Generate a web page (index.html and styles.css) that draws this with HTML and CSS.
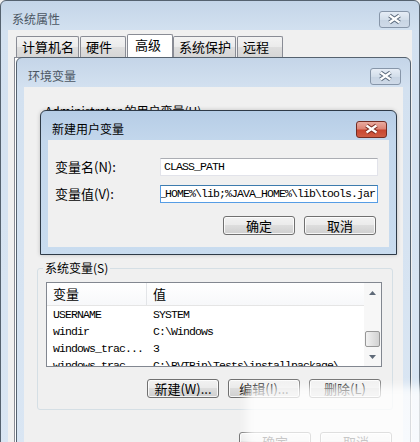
FILE: index.html
```html
<!DOCTYPE html>
<html lang="zh-CN">
  <head>
    <meta charset="UTF-8" />
    <meta name="viewport" content="width=device-width, initial-scale=1.0" />
    <title>新建用户变量</title>
    <link rel="stylesheet" href="styles.css">
  </head>
  <body>
    <div class="desktop">
      <!-- 系统属性 -->
      <section class="window outer">
        <header class="titlebar">
          <span class="title">系统属性</span>
          <span class="close">
            <svg viewBox="0 0 31 17" width="31" height="17"><path class="x-out" d="M10.5 4.5L20.5 11.5M20.5 4.5L10.5 11.5"/><path class="x-in" d="M10.5 4.5L20.5 11.5M20.5 4.5L10.5 11.5"/></svg>
          </span>
        </header>
        <div class="client">
          <nav class="tabs">
            <span class="tab">计算机名</span>
            <span class="tab">硬件</span>
            <span class="tab selected">高级</span>
            <span class="tab">系统保护</span>
            <span class="tab">远程</span>
          </nav>
          <div class="tab-page"></div>
        </div>
      </section>

      <!-- 环境变量 -->
      <section class="window env">
        <header class="titlebar">
          <span class="title">环境变量</span>
          <span class="close">
            <svg viewBox="0 0 31 17" width="31" height="17"><path class="x-out" d="M10.5 4.5L20.5 11.5M20.5 4.5L10.5 11.5"/><path class="x-in" d="M10.5 4.5L20.5 11.5M20.5 4.5L10.5 11.5"/></svg>
          </span>
        </header>
        <div class="client">
          <div class="user-label">Administrator 的用户变量(U)</div>
          <div class="user-vars"></div>

          <fieldset class="group">
            <legend>系统变量(S)</legend>
            <div class="listbox">
              <div class="list-body">
                <div class="list-head">
                  <span class="col-name">变量</span>
                  <span class="col-value">值</span>
                </div>
                <div class="row"><span class="col-name">USERNAME</span><span class="col-value">SYSTEM</span></div>
                <div class="row"><span class="col-name">windir</span><span class="col-value">C:\Windows</span></div>
                <div class="row"><span class="col-name">windows_trac...</span><span class="col-value">3</span></div>
                <div class="row"><span class="col-name">windows_trac...</span><span class="col-value">C:\BVTBin\Tests\installpackage\</span></div>
              </div>
              <div class="scrollbar">
                <svg class="arrow" viewBox="0 0 7 4" width="7" height="4"><path d="M0 4L3.5 0L7 4Z"/></svg>
                <span class="thumb"></span>
                <svg class="arrow" viewBox="0 0 7 4" width="7" height="4"><path d="M0 0L3.5 4L7 0Z"/></svg>
              </div>
            </div>
            <div class="buttons">
              <button class="btn">新建(W)...</button>
              <button class="btn">编辑(I)...</button>
              <button class="btn">删除(L)</button>
            </div>
          </fieldset>

          <div class="buttons dialog-buttons">
            <button class="btn">确定</button>
            <button class="btn">取消</button>
          </div>
        </div>
      </section>

      <!-- 新建用户变量 -->
      <section class="window new-var active">
        <header class="titlebar">
          <span class="title">新建用户变量</span>
          <span class="close">
            <svg viewBox="0 0 31 17" width="31" height="17"><path class="x-out" d="M10.5 4.5L20.5 11.5M20.5 4.5L10.5 11.5"/><path class="x-in" d="M10.5 4.5L20.5 11.5M20.5 4.5L10.5 11.5"/></svg>
          </span>
        </header>
        <div class="client form">
          <div class="field">
            <label>变量名(N):</label>
            <div class="textbox">CLASS_PATH</div>
          </div>
          <div class="field">
            <label>变量值(V):</label>
            <div class="textbox focused"><span>.;%JAVA_HOME%\lib;%JAVA_HOME%\lib\tools.jar</span></div>
          </div>
          <div class="buttons">
            <button class="btn">确定</button>
            <button class="btn">取消</button>
          </div>
        </div>
      </section>

      <div class="wash"></div>
    </div>
  </body>
</html>
```

FILE: styles.css
```css
* {
  box-sizing: border-box;
}
body {
  margin: 0;
  font-family: "Noto Sans CJK SC", "Noto Sans", sans-serif;
  font-size: 12px;
  line-height: 16px;
  color: #000;
  background-color: #f0f0f0;
}
.desktop {
  position: relative;
  width: 420px;
  height: 442px;
  overflow: hidden;
}

/* window frame */
.window {
  position: absolute;
  display: flex;
  flex-direction: column;
  padding: 0 7px 7px;
  border: 1px solid #55626f;
  border-radius: 6px 6px 0 0;
  background: linear-gradient(#c4d5e8, #d3e1f0 30px, #dae6f3);
}
.window.active {
  border-color: #2e3a47;
  background: linear-gradient(#b6cde6, #c3d7ec 30px, #c9dcef);
}
.outer {
  left: 0;
  top: 0;
  width: 420px;
  height: 470px;
}
.env {
  left: 16px;
  top: 57px;
  width: 395px;
  height: 400px;
}
.new-var {
  left: 40px;
  top: 110px;
  width: 357px;
  height: 145px;
  box-shadow: 0 0 4px rgba(0, 0, 0, 0.2);
}
.titlebar {
  height: 29px;
  flex: none;
  display: flex;
  align-items: center;
  justify-content: space-between;
  padding: 7px 2px 0 4px;
}
.title {
  color: #4b5663;
}
.active .title {
  color: #000;
}
.close {
  display: flex;
  width: 31px;
  height: 17px;
  border: 1px solid #8796a9;
  border-radius: 3px;
  background: linear-gradient(#e6edf6, #d3deea 50%, #c7d4e3 51%, #cfdae8);
}
.close svg {
  margin: -1px;
}
.x-out {
  fill: none;
  stroke: #5b6a7c;
  stroke-width: 4.4;
}
.x-in {
  fill: none;
  stroke: #fff;
  stroke-width: 2.2;
}
.active .close {
  border-color: #732c23;
  background: linear-gradient(#e9aba0, #dc8272 48%, #c8452f 52%, #cf5d44);
}
.active .x-out {
  stroke: #7a2b20;
}
.client {
  flex: 1;
  display: flex;
  flex-direction: column;
  background-color: #f0f0f0;
}

/* tabs */
.tabs {
  display: flex;
  align-items: flex-end;
  height: 27px;
  padding-left: 8px;
}
.tab {
  height: 21px;
  min-width: 46px;
  padding: 2px 4px 0 5px;
  border: 1px solid #898c95;
  border-bottom: none;
  border-radius: 2px 2px 0 0;
  background: linear-gradient(#f3f3f3, #ebebeb 50%, #dedede 51%, #d6d6d6);
  font-size: 13px;
}
.tab.selected {
  position: relative;
  height: 24px;
  margin: 0 -1px -1px;
  padding-left: 7px;
  background: #fff;
}
.tab + .tab {
  margin-left: 1px;
}
.tab-page {
  flex: 1;
  margin: 0 6px 0 6px;
  border: 1px solid #898c95;
  background: #fff;
}

/* 环境变量 */
.user-label {
  margin-top: 16px;
  padding-left: 21px;
}
.user-vars {
  height: 141px;
}
.group {
  margin: 0 10px 0 13px;
  padding: 6px 10px 11px 8px;
  border: 1px solid #d5dfe5;
  border-radius: 3px;
  min-width: 0;
}
.group legend {
  padding: 0 2px;
  margin-left: -3px;
}
.listbox {
  display: flex;
  height: 85px;
  border: 1px solid #828790;
  background: #fff;
}
.list-body {
  flex: 1;
  overflow: hidden;
}
.list-head {
  display: flex;
  height: 23px;
  align-items: center;
  border-bottom: 1px solid #e5e5e5;
  background: linear-gradient(#fff, #f7f8fa);
  font-size: 13px;
}
.list-head .col-name {
  border-right: 1px solid #e3e5e8;
  align-self: stretch;
  display: flex;
  align-items: center;
}
.row {
  display: flex;
  height: 17px;
  align-items: center;
  font-family: "Liberation Mono", "DejaVu Sans Mono", monospace;
  font-size: 11.5px;
  letter-spacing: -0.9px;
  white-space: nowrap;
}
.col-name {
  width: 100px;
  flex: none;
  padding-left: 6px;
  overflow: hidden;
}
.col-value {
  padding-left: 6px;
}
.scrollbar {
  width: 17px;
  flex: none;
  display: flex;
  flex-direction: column;
  align-items: center;
  padding: 8px 0 7px;
  background: #f7f7f7;
}
.arrow {
  fill: #5f6a78;
}
.thumb {
  width: 15px;
  height: 16px;
  margin: 36px 0 auto;
  border: 1px solid #979797;
  border-radius: 2px;
  background: linear-gradient(to right, #f2f2f2, #e2e2e2 50%, #d2d2d2);
}

/* buttons */
.buttons {
  display: flex;
  justify-content: flex-end;
  gap: 9px;
}
.group .buttons {
  margin: 12px 1px 0 0;
}
.dialog-buttons {
  margin: 22px 11px 0 0;
}
.btn {
  width: 72px;
  height: 19px;
  padding: 0;
  border: 1px solid #707070;
  border-radius: 3px;
  background: linear-gradient(#f2f2f2, #ebebeb 45%, #dddddd 50%, #cfcfcf);
  box-shadow: inset 0 0 0 1px rgba(255, 255, 255, 0.8);
  font-family: "Noto Sans CJK SC", "Noto Sans", sans-serif;
  font-size: 13px;
  line-height: 16px;
  color: #000;
}

/* 新建用户变量 */
.form {
  padding: 18px 11px 12px 7px;
}
.field {
  display: flex;
  align-items: center;
  height: 18px;
  margin-bottom: 9px;
}
.field label {
  width: 105px;
  flex: none;
  font-size: 13px;
}
.textbox {
  flex: 1;
  display: flex;
  align-items: center;
  height: 18px;
  padding: 0 2px 0 3px;
  overflow: hidden;
  white-space: nowrap;
  border: 1px solid #e2e3ea;
  border-top-color: #abadb3;
  background: #fff;
  font-family: "Liberation Mono", "DejaVu Sans Mono", monospace;
  font-size: 11.5px;
  letter-spacing: -0.9px;
}
.textbox.focused {
  justify-content: flex-end;
  border-color: #569de5;
  border-top-color: #3d7bad;
}
.form .buttons {
  margin: 4px 2px 0 0;
}

/* faded corner of the photo */
.wash {
  position: absolute;
  left: 246px;
  top: 386px;
  width: 200px;
  height: 80px;
  background: rgba(255, 255, 255, 0.78);
  filter: blur(5px);
}
```
